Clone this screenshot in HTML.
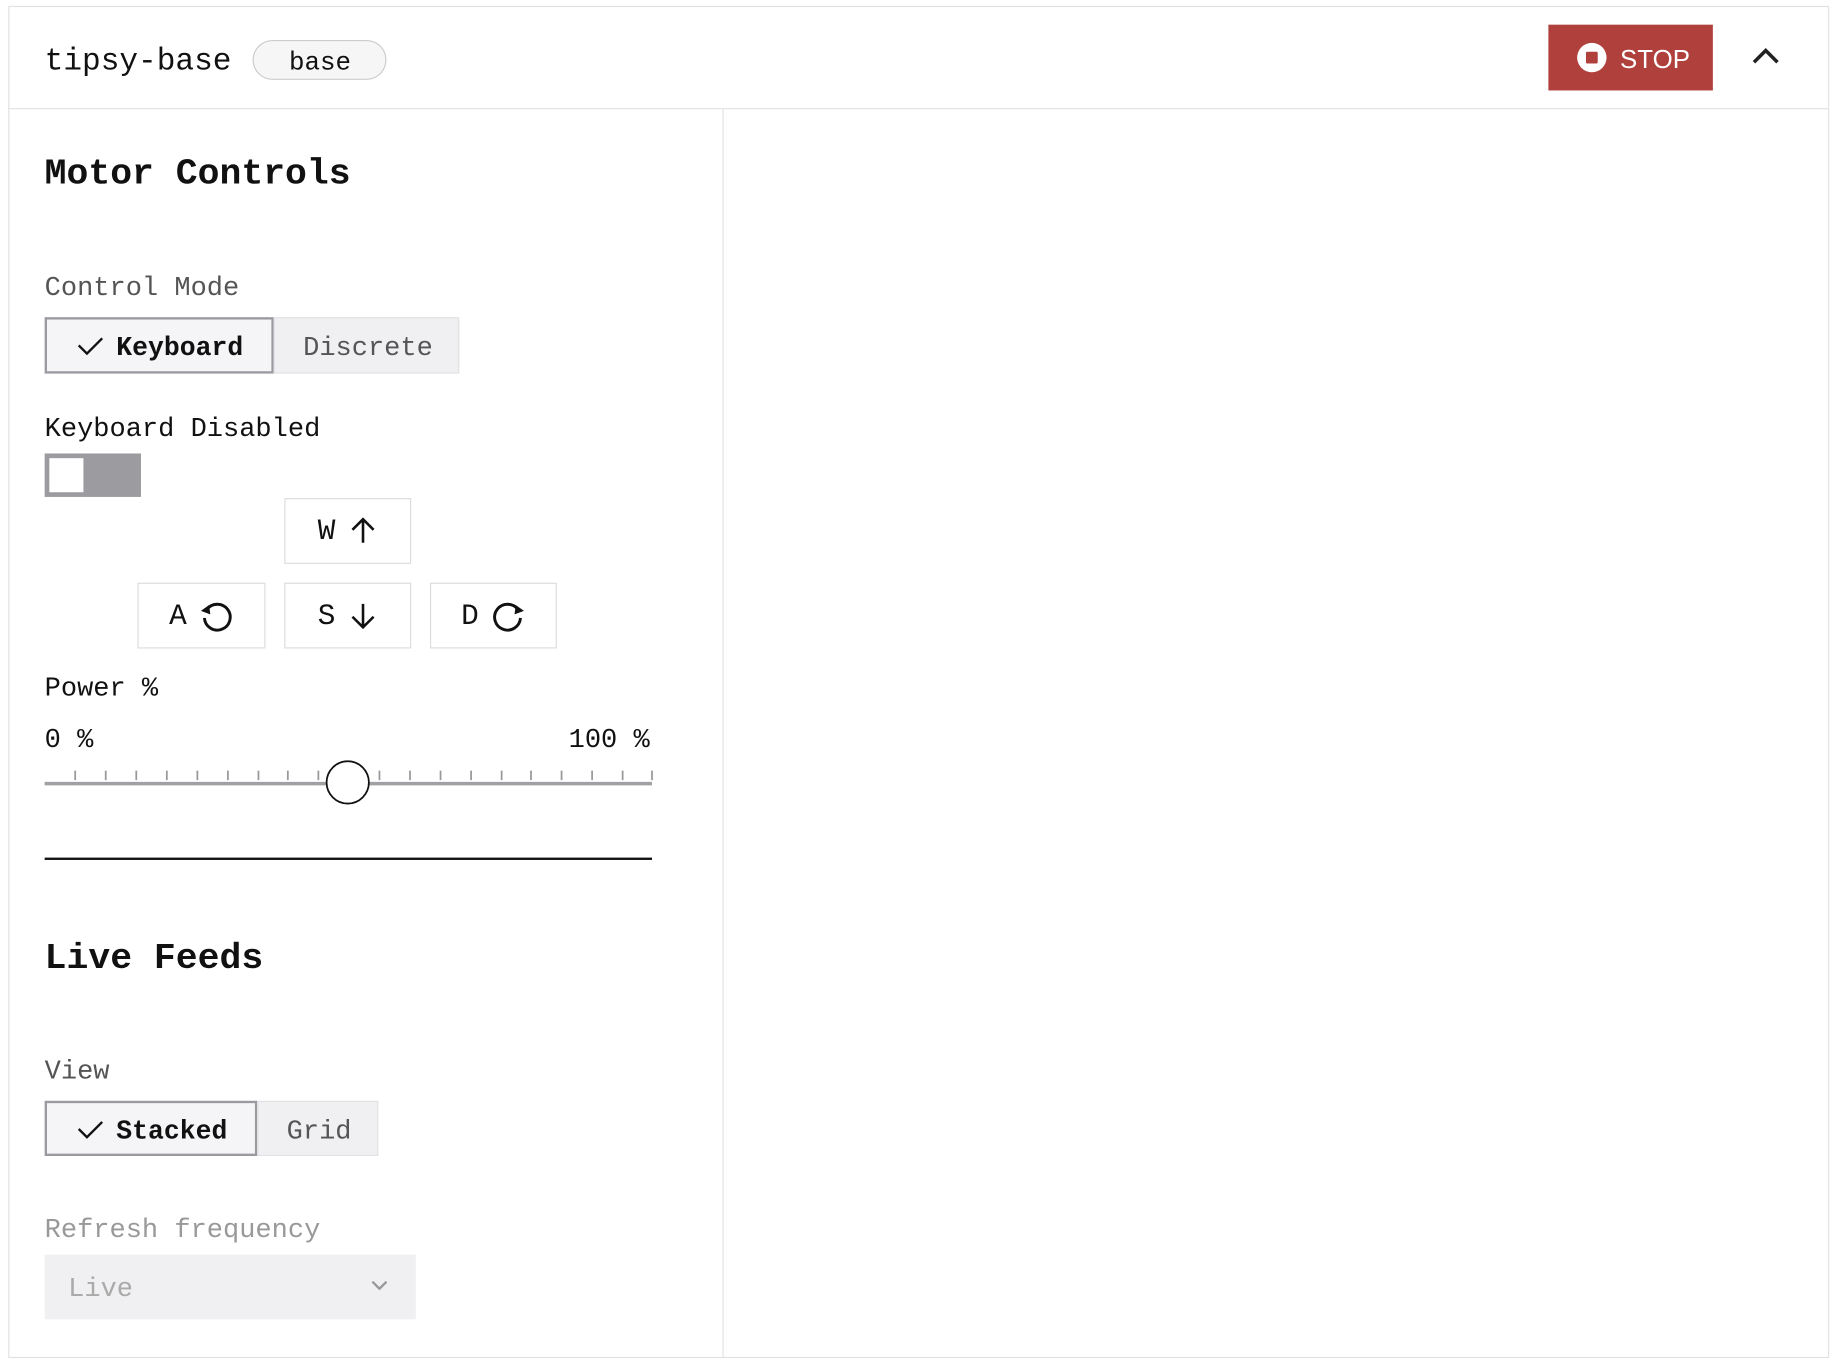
<!DOCTYPE html>
<html><head><meta charset="utf-8"><style>
html,body{margin:0;padding:0;background:#fff;width:1842px;height:1364px;overflow:hidden}
#s{position:absolute;left:0;top:0;width:1568px;height:1161px;transform:scale(1.1748);transform-origin:0 0;font-family:"Liberation Mono",monospace;color:#111}
.a{position:absolute}
.t{position:absolute;white-space:nowrap;line-height:1;margin-top:2px}
.key{position:absolute;border:1px solid #ddd;box-sizing:border-box;display:flex;align-items:center;justify-content:center;font-size:25px;gap:10px;background:#fff}
</style></head><body><div id="s">
<div class="a" style="left:7px;top:5px;width:1548px;height:1149px;border:1px solid #e2e2e4"></div>
<div class="a" style="left:7px;top:92px;width:1549px;height:1px;background:#e2e2e4"></div>
<div class="a" style="left:615px;top:93px;width:1px;height:1062px;background:#e2e2e4"></div>
<div class="t" style="left:38px;top:37px;font-size:26.5px">tipsy-base</div>
<div class="a" style="left:215px;top:34px;width:114px;height:34px;border:1px solid #ccc;border-radius:18px;background:#f6f6f6;box-sizing:border-box"></div>
<div class="t" style="left:246px;top:41px;font-size:22px">base</div>
<div class="a" style="left:1318px;top:21px;width:140px;height:56px;background:#b0403c"></div>
<svg class="a" style="left:1342px;top:36px" width="26" height="26"><circle cx="13" cy="13" r="12.5" fill="#fff"/><rect x="8" y="8" width="10" height="10" rx="1" fill="#b0403c"/></svg>
<div class="t" style="left:1379px;top:38px;font-size:22px;color:#fff;font-family:'Liberation Sans',sans-serif">STOP</div>
<svg class="a" style="left:1490px;top:38px" width="26" height="20"><path d="M3 15 L13 5 L23 15" fill="none" stroke="#222" stroke-width="3"/></svg>

<div class="t" style="left:38px;top:131px;font-size:31px;font-weight:bold">Motor Controls</div>
<div class="t" style="left:38px;top:232px;font-size:23px;color:#555">Control Mode</div>
<div class="a" style="left:38px;top:270px;width:195px;height:48px;border:2px solid #9a9aa0;box-sizing:border-box;background:#f5f5f7"></div>
<svg class="a" style="left:64px;top:284px" width="26" height="20"><path d="M3 10 L10 17 L23 4" fill="none" stroke="#111" stroke-width="2"/></svg>
<div class="t" style="left:99px;top:283px;font-size:22.5px;font-weight:bold">Keyboard</div>
<div class="a" style="left:233px;top:270px;width:158px;height:48px;border:1px solid #e2e2e4;box-sizing:border-box;background:#f0f0f2"></div>
<div class="t" style="left:258px;top:283px;font-size:23px;color:#555">Discrete</div>
<div class="t" style="left:38px;top:352px;font-size:23px">Keyboard Disabled</div>
<div class="a" style="left:38px;top:386px;width:82px;height:37px;background:#9c9ca0"></div>
<div class="a" style="left:42px;top:390px;width:29px;height:29px;background:#fff"></div>

<div class="key" style="left:242px;top:424px;width:108px;height:56px">W<svg width="26" height="26"><path d="M13 23V3M4 12l9-9 9 9" fill="none" stroke="#111" stroke-width="2.2"/></svg></div>
<div class="key" style="left:117px;top:496px;width:109px;height:56px">A<svg width="30" height="30"><path d="M7 10A11 11 0 1 1 5 17" fill="none" stroke="#111" stroke-width="2.5"/><path d="M2 11L9 6 10 14Z" fill="#111"/></svg></div>
<div class="key" style="left:242px;top:496px;width:108px;height:56px">S<svg width="26" height="26"><path d="M13 3V23M4 14l9 9 9-9" fill="none" stroke="#111" stroke-width="2.2"/></svg></div>
<div class="key" style="left:366px;top:496px;width:108px;height:56px">D<svg width="30" height="30"><path d="M23 10A11 11 0 1 0 25 17" fill="none" stroke="#111" stroke-width="2.5"/><path d="M28 11L21 6 20 14Z" fill="#111"/></svg></div>

<div class="t" style="left:38px;top:573px;font-size:23px">Power %</div>
<div class="t" style="left:38px;top:617px;font-size:23px">0 %</div>
<div class="t" style="left:484px;top:617px;font-size:23px">100 %</div>
<svg class="a" style="left:36px;top:641px" width="524" height="50">
<line x1="2" y1="26" x2="519" y2="26" stroke="#a0a0a5" stroke-width="3"/>
<g stroke="#999" stroke-width="1.5">
<line x1="28" y1="15" x2="28" y2="23"/><line x1="54" y1="15" x2="54" y2="23"/><line x1="80" y1="15" x2="80" y2="23"/><line x1="106" y1="15" x2="106" y2="23"/><line x1="132" y1="15" x2="132" y2="23"/><line x1="158" y1="15" x2="158" y2="23"/><line x1="184" y1="15" x2="184" y2="23"/><line x1="209" y1="15" x2="209" y2="23"/><line x1="235" y1="15" x2="235" y2="23"/><line x1="287" y1="15" x2="287" y2="23"/><line x1="313" y1="15" x2="313" y2="23"/><line x1="339" y1="15" x2="339" y2="23"/><line x1="365" y1="15" x2="365" y2="23"/><line x1="391" y1="15" x2="391" y2="23"/><line x1="416" y1="15" x2="416" y2="23"/><line x1="442" y1="15" x2="442" y2="23"/><line x1="468" y1="15" x2="468" y2="23"/><line x1="494" y1="15" x2="494" y2="23"/><line x1="519" y1="15" x2="519" y2="23"/>
</g>
<circle cx="260" cy="25" r="18" fill="#fff" stroke="#111" stroke-width="1.5"/>
</svg>
<div class="a" style="left:38px;top:730px;width:517px;height:2px;background:#111"></div>

<div class="t" style="left:38px;top:799px;font-size:31px;font-weight:bold">Live Feeds</div>
<div class="t" style="left:38px;top:899px;font-size:23px;color:#555">View</div>
<div class="a" style="left:38px;top:937px;width:181px;height:47px;border:2px solid #9a9aa0;box-sizing:border-box;background:#f5f5f7"></div>
<svg class="a" style="left:64px;top:951px" width="26" height="20"><path d="M3 10 L10 17 L23 4" fill="none" stroke="#111" stroke-width="2"/></svg>
<div class="t" style="left:99px;top:950px;font-size:22.5px;font-weight:bold">Stacked</div>
<div class="a" style="left:219px;top:937px;width:103px;height:47px;border:1px solid #e2e2e4;box-sizing:border-box;background:#f0f0f2"></div>
<div class="t" style="left:244px;top:950px;font-size:23px;color:#555">Grid</div>
<div class="t" style="left:38px;top:1034px;font-size:23px;color:#999">Refresh frequency</div>
<div class="a" style="left:38px;top:1068px;width:316px;height:55px;background:#f0f0f2"></div>
<div class="t" style="left:58px;top:1084px;font-size:23px;color:#aaa">Live</div>
<svg class="a" style="left:314px;top:1087px" width="18" height="14"><path d="M3 4l6 6 6-6" fill="none" stroke="#999" stroke-width="2"/></svg>
</div></body></html>
